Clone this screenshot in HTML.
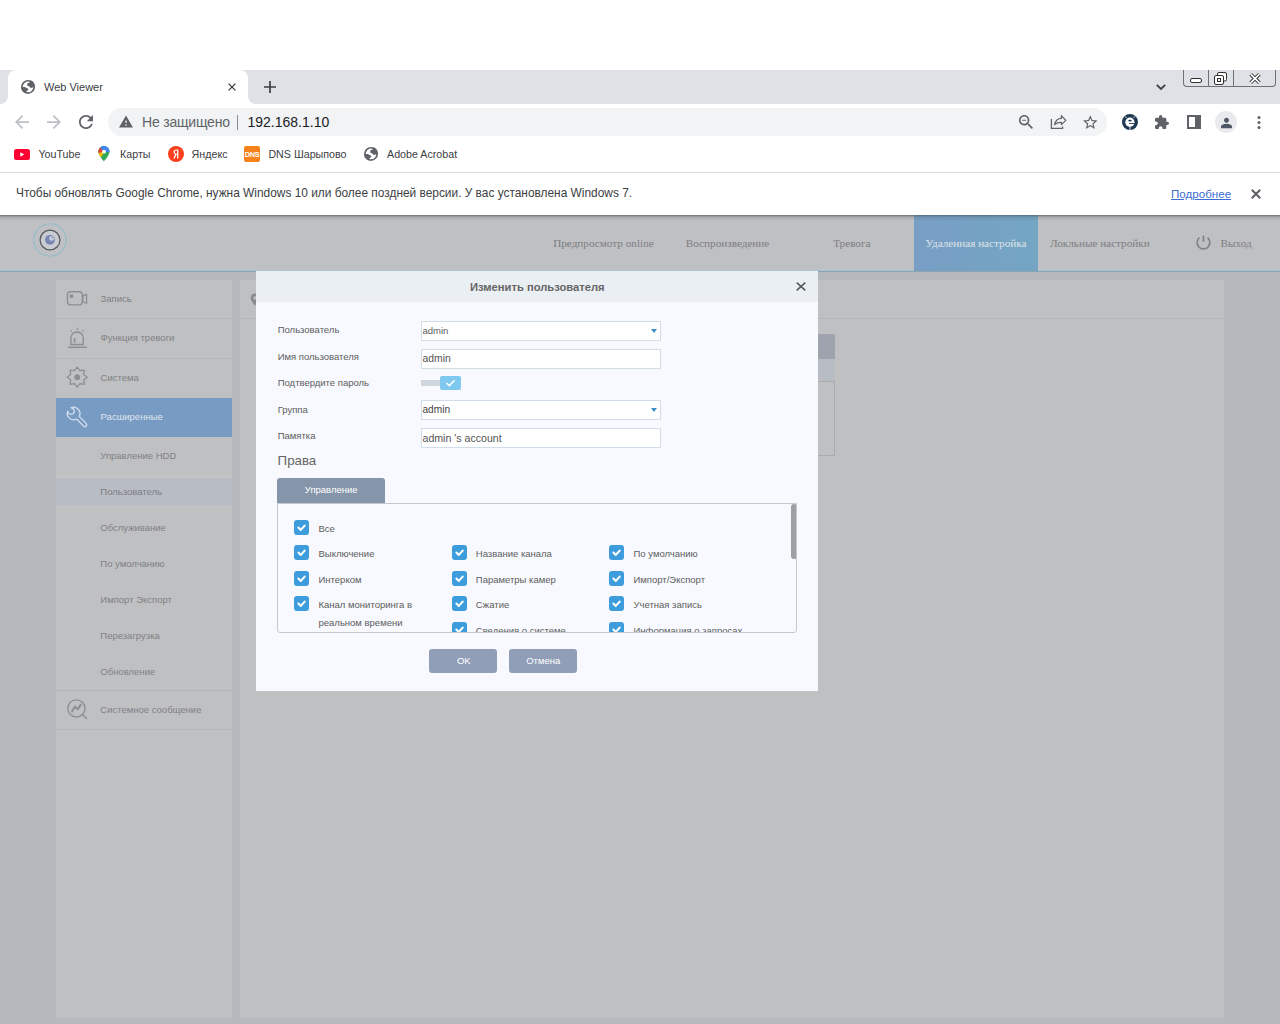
<!DOCTYPE html>
<html><head><meta charset="utf-8">
<style>
*{margin:0;padding:0;box-sizing:border-box}
html,body{width:1280px;height:1024px;overflow:hidden;background:#fff;font-family:"Liberation Sans",sans-serif}
.a{position:absolute}
.t{position:absolute;white-space:nowrap;line-height:1}
.sf{font-family:"Liberation Serif",serif}
svg{position:absolute;overflow:visible}
</style></head><body>
<!-- ============ CHROME ============ -->
<div class="a" style="left:0;top:0;width:1280px;height:70px;background:#fff"></div>
<div class="a" id="tabbar" style="left:0;top:70px;width:1280px;height:34px;background:#dee1e6"></div>
<!-- active tab -->
<div class="a" style="left:8px;top:70px;width:240px;height:34px;background:#fff;border-radius:8px 8px 0 0"></div>
<div class="a" style="left:0;top:96px;width:8px;height:8px;background:#fff"></div>
<div class="a" style="left:0;top:88px;width:8px;height:16px;background:#dee1e6;border-radius:0 0 8px 0"></div>
<div class="a" style="left:248px;top:96px;width:8px;height:8px;background:#fff"></div>
<div class="a" style="left:248px;top:88px;width:8px;height:16px;background:#dee1e6;border-radius:0 0 0 8px"></div>
<!-- toolbar -->
<div class="a" style="left:0;top:104px;width:1280px;height:68px;background:#fff"></div>
<div class="a" style="left:108px;top:108px;width:999px;height:28px;background:#f1f3f4;border-radius:14px"></div>
<div class="a" style="left:0;top:172px;width:1280px;height:1px;background:#dadce0"></div>
<!-- infobar -->
<div class="a" style="left:0;top:173px;width:1280px;height:42px;background:#fff"></div>


<!-- tab content -->
<svg style="left:18px;top:77px" width="20" height="20" viewBox="0 0 20 20"><circle cx="10" cy="9.9" r="6.15" fill="#fff" stroke="#5f6368" stroke-width="1.7"/><path d="M12.6 3.3L11.2 5.8L9.4 6.3L9.2 8.6L11.6 9.8L12.6 11L14.6 10.4L16.7 9.8A6.8 6.8 0 0 0 12.6 3.3Z" fill="#5f6368"/><path d="M3.3 10.1L6.6 10L9.4 11.2L10.6 12.4L8.6 14.2L8 16.5A6.8 6.8 0 0 1 3.3 10.1Z" fill="#5f6368"/></svg>
<div class="t" style="left:44px;top:81.7px;font-size:11px;color:#3c4043">Web Viewer</div>
<svg style="left:228px;top:83px" width="8" height="8" viewBox="0 0 8 8"><path d="M0.6 0.6L7.4 7.4M7.4 0.6L0.6 7.4" stroke="#3c4043" stroke-width="1.3"/></svg>
<svg style="left:264px;top:81px" width="12" height="12" viewBox="0 0 12 12"><path d="M6 0V12M0 6H12" stroke="#3c4043" stroke-width="1.7"/></svg>
<svg style="left:1156px;top:83.5px" width="10" height="6" viewBox="0 0 10 6"><path d="M0.8 0.8L5 5L9.2 0.8" fill="none" stroke="#3c4043" stroke-width="1.8"/></svg>
<!-- window buttons -->
<div class="a" style="left:1183px;top:70px;width:93px;height:17px;border:1px solid #6f7174;border-top:none;border-radius:0 0 4px 4px"></div>
<div class="a" style="left:1208px;top:70px;width:1px;height:16px;background:#6f7174"></div>
<div class="a" style="left:1233px;top:70px;width:1px;height:16px;background:#6f7174"></div>
<div class="a" style="left:1190px;top:78px;width:12px;height:5px;border:1px solid #303030;border-radius:2px;background:#fff"></div>
<svg style="left:1214px;top:72px" width="13" height="13" viewBox="0 0 13 13"><rect x="3.5" y="0.5" width="9" height="8.5" rx="1.5" fill="#fff" stroke="#303030"/><rect x="0.5" y="3.5" width="9" height="9" rx="1.5" fill="#fff" stroke="#303030"/><rect x="3.5" y="6.5" width="3" height="3" fill="#fff" stroke="#303030"/></svg>
<svg style="left:1248.5px;top:72.5px" width="12" height="11" viewBox="0 0 12 11"><path d="M1.6 1.2L10.4 9.8M10.4 1.2L1.6 9.8" stroke="#303030" stroke-width="3.6"/><path d="M1.6 1.2L10.4 9.8M10.4 1.2L1.6 9.8" stroke="#fff" stroke-width="1.7"/></svg>
<!-- nav buttons -->
<svg style="left:15px;top:115px" width="14" height="14" viewBox="4 4 16 16"><path fill="#bdc1c6" d="M20 11H7.83l5.59-5.59L12 4l-8 8 8 8 1.41-1.41L7.83 13H20v-2z"/></svg>
<svg style="left:47px;top:115px" width="14" height="14" viewBox="4 4 16 16"><path fill="#bdc1c6" d="M12 4l-1.41 1.41L16.17 11H4v2h12.17l-5.58 5.59L12 20l8-8z"/></svg>
<svg style="left:79px;top:115px" width="14" height="14" viewBox="4 4 16 16"><path fill="#5f6368" d="M17.65 6.35C16.2 4.9 14.21 4 12 4c-4.42 0-7.99 3.58-7.99 8s3.57 8 7.99 8c3.73 0 6.84-2.55 7.73-6h-2.08c-.82 2.33-3.04 4-5.65 4-3.31 0-6-2.690-6-6s2.69-6 6-6c1.66 0 3.14.69 4.22 1.78L13 11h7V4l-2.35 2.35z"/></svg>
<!-- omnibox content -->
<svg style="left:119px;top:115px" width="14" height="13" viewBox="1 2 22 19"><path fill="#5f6368" d="M1 21h22L12 2 1 21zm12-3h-2v-2h2v2zm0-4h-2v-4h2v4z"/></svg>
<div class="t" style="left:142px;top:115.3px;font-size:14px;letter-spacing:-0.2px;color:#5f6368">Не защищено</div>
<div class="a" style="left:237px;top:115px;width:1px;height:15px;background:#8a8e93"></div>
<div class="t" style="left:247.5px;top:115.3px;font-size:14px;color:#202124">192.168.1.10</div>
<svg style="left:1019px;top:115px" width="14" height="14" viewBox="3 3 17.5 17.5"><path fill="#5f6368" d="M15.5 14h-.79l-.28-.27C15.41 12.590 16 11.11 16 9.5 16 5.91 13.09 3 9.5 3S3 5.91 3 9.5 5.91 16 9.5 16c1.61 0 3.09-.59 4.23-1.57l.27.28v.79l5 4.99L20.490 19l-4.99-5zm-6 0C7.01 14 5 11.99 5 9.5S7.01 5 9.5 5 14 7.01 14 9.5 11.99 14 9.5 14zM7 9h5v1.3H7z"/></svg>
<svg style="left:1046px;top:110px" width="24" height="24" viewBox="0 0 24 24"><path d="M5.4 9V18.4H16.6V16.6" fill="none" stroke="#5f6368" stroke-width="1.3"/><path d="M8.6 14.6C9.5 10.5 12 8.3 15.4 8.3V5.6L19.8 10.4L15.4 14.6V12.4C12.3 12.2 10.2 13.2 8.6 14.6Z" fill="none" stroke="#5f6368" stroke-width="1.25" stroke-linejoin="round"/></svg>
<svg style="left:1082.6px;top:114.6px" width="14.6" height="14.2" viewBox="2 2 20 19"><path fill="#5f6368" d="M22 9.24l-7.19-.62L12 2 9.19 8.63 2 9.24l5.46 4.73L5.82 21 12 17.27 18.18 21l-1.63-7.03L22 9.24zM12 15.4l-3.76 2.27 1-4.28-3.32-2.88 4.38-.38L12 6.1l1.71 4.04 4.38.38-3.32 2.88 1 4.28L12 15.4z"/></svg>
<!-- extensions -->
<svg style="left:1118px;top:110px" width="24" height="24" viewBox="0 0 24 24"><circle cx="12" cy="12" r="8" fill="#1f3a52"/><path d="M6.8 6.2L8.6 8M17.2 6.2L15.4 8M12 16V20" stroke="#fff" stroke-width="1" opacity="0.85"/><circle cx="11.9" cy="12.2" r="4.6" fill="#fff"/><ellipse cx="12" cy="10.6" rx="1.8" ry="0.85" fill="#1f3a52"/><path d="M11 13.1H16.8V14H11z" fill="#1f3a52"/></svg>
<svg style="left:1155px;top:115px" width="14" height="14" viewBox="2 1 21 21"><path fill="#5f6368" d="M20.5 11H19V7c0-1.1-.9-2-2-2h-4V3.5C13 2.12 11.88 1 10.5 1S8 2.12 8 3.5V5H4c-1.1 0-1.99.9-1.99 2v3.8H3.5c1.49 0 2.7 1.21 2.7 2.7s-1.21 2.7-2.7 2.7H2V20c0 1.1.9 2 2 2h3.8v-1.5c0-1.49 1.21-2.7 2.7-2.7 1.49 0 2.7 1.21 2.7 2.7V22H17c1.1 0 2-.9 2-2v-4h1.5c1.38 0 2.5-1.12 2.5-2.5S21.88 11 20.5 11z"/></svg>
<svg style="left:1187px;top:115px" width="14" height="14" viewBox="0 0 14 14"><rect x="1" y="1" width="12" height="12" fill="none" stroke="#5f6368" stroke-width="2"/><rect x="8" y="1" width="5" height="12" fill="#5f6368"/></svg>
<div class="a" style="left:1215px;top:111px;width:22px;height:22px;border-radius:11px;background:#e8eaed"></div>
<svg style="left:1219.5px;top:115.5px" width="13" height="13" viewBox="3 3 18 18"><path fill="#4f5866" d="M12 12.2c2.000 0 3.400-1.500 3.400-3.400S14 5.400 12 5.400 8.600 6.900 8.600 8.800 10 12.200 12 12.200zm0 1.600c-2.400 0-7.600 1.200-7.600 3.600V20h15.200v-2.600c0-2.400-5.200-3.600-7.600-3.600z"/></svg>
<svg style="left:1256.5px;top:114px" width="4" height="17" viewBox="0 0 4 17"><circle cx="2" cy="3.5" r="1.5" fill="#5f6368"/><circle cx="2" cy="8.5" r="1.5" fill="#5f6368"/><circle cx="2" cy="13.5" r="1.5" fill="#5f6368"/></svg>
<!-- bookmarks -->
<svg style="left:14px;top:148.5px" width="16" height="11" viewBox="0 0 16 11"><rect width="16" height="11" rx="2.5" fill="#ff0033"/><path d="M6.3 3.2V7.8L10.2 5.5z" fill="#fff"/></svg>
<div class="t" style="left:38.4px;top:148.9px;font-size:10.7px;color:#3c4043">YouTube</div>
<svg style="left:94px;top:144px" width="20" height="20" viewBox="0 0 20 20"><defs><clipPath id="pinc"><path d="M9.9 2C6.8 2 4.3 4.5 4.3 7.6C4.3 11.6 9.9 17.4 9.9 17.4C9.9 17.4 15.5 11.6 15.5 7.6C15.5 4.5 13 2 9.9 2Z"/></clipPath></defs><g clip-path="url(#pinc)"><rect width="20" height="20" fill="#34a853"/><path d="M10 7.7L4.5 2.2L4.5 0L20 0L20 9.2Z" fill="#4285f4"/><path d="M10 7.7L4.5 2.2L0 2.2L0 10.2Z" fill="#ea4335"/><path d="M10 7.7L0 10.2L0 14L7.6 12.8Z" fill="#fbbc04"/></g><circle cx="10" cy="7.7" r="1.9" fill="#fff"/></svg>
<div class="t" style="left:120px;top:148.9px;font-size:10.7px;color:#3c4043">Карты</div>
<svg style="left:168px;top:146px" width="16" height="16" viewBox="0 0 16 16"><circle cx="8" cy="8" r="8" fill="#fc3f1d"/><path d="M9.1 3.6H8.1C6.5 3.6 5.5 4.500 5.5 6C5.5 7.2 6.1 7.900 7.1 8.400L5.300 12.4H6.800L8.400 8.700H9.100V12.4H10.400V3.6z M9.1 7.700H8.300C7.300 7.700 6.900 7.100 6.900 6.100C6.900 5.100 7.400 4.600 8.300 4.600H9.100z" fill="#fff"/></svg>
<div class="t" style="left:191.6px;top:148.9px;font-size:10.7px;color:#3c4043">Яндекс</div>
<svg style="left:244px;top:146px" width="16" height="16" viewBox="0 0 16 16"><rect width="16" height="16" rx="2" fill="#f7821b"/><text x="8" y="10.9" font-family="Liberation Sans" font-size="7.4" font-weight="bold" fill="#fff" text-anchor="middle" letter-spacing="-0.45">DNS</text></svg>
<div class="t" style="left:268.4px;top:148.9px;font-size:10.7px;color:#3c4043">DNS Шарыпово</div>
<svg style="left:360.8px;top:144.4px" width="20" height="20" viewBox="0 0 20 20"><circle cx="10" cy="9.9" r="6.15" fill="#fff" stroke="#5f6368" stroke-width="1.7"/><path d="M12.6 3.3L11.2 5.8L9.4 6.3L9.2 8.6L11.6 9.8L12.6 11L14.6 10.4L16.7 9.8A6.8 6.8 0 0 0 12.6 3.3Z" fill="#5f6368"/><path d="M3.3 10.1L6.6 10L9.4 11.2L10.6 12.4L8.6 14.2L8 16.5A6.8 6.8 0 0 1 3.3 10.1Z" fill="#5f6368"/></svg>
<div class="t" style="left:387px;top:148.9px;font-size:10.7px;color:#3c4043">Adobe Acrobat</div>
<!-- infobar content -->
<div class="t" style="left:16px;top:187.7px;font-size:11.9px;color:#3c4043">Чтобы обновлять Google Chrome, нужна Windows 10 или более поздней версии. У вас установлена Windows 7.</div>
<div class="t" style="left:1171px;top:188px;font-size:11.6px;color:#3a6cd2;text-decoration:underline">Подробнее</div>
<svg style="left:1251px;top:189px" width="10" height="10" viewBox="0 0 10 10"><path d="M0.8 0.8L9.2 9.2M9.2 0.8L0.8 9.2" stroke="#5f6368" stroke-width="2.1"/></svg>

<!-- ============ PAGE ============ -->
<div class="a" id="page" style="left:0;top:215px;width:1280px;height:809px;background:#b5b8bc"></div>
<!-- header -->
<div class="a" style="left:0;top:215px;width:1280px;height:56px;background:#bfc0c3"></div>
<div class="a" style="left:0;top:215px;width:1280px;height:6px;background:linear-gradient(#6f7072,rgba(150,150,152,0.5) 35%,rgba(190,190,193,0))"></div>
<div class="a" style="left:0;top:270px;width:1280px;height:1px;background:#abc4d1"></div>
<div class="a" style="left:0;top:271px;width:1280px;height:1px;background:#8aa4b1"></div>
<div class="a" style="left:914px;top:215px;width:124px;height:56px;background:linear-gradient(90deg,#789ec4,#74a5c3)"></div>
<div class="a" style="left:914px;top:215px;width:124px;height:6px;background:linear-gradient(rgba(60,70,80,0.55),rgba(60,70,80,0.15) 35%,rgba(60,70,80,0))"></div>
<svg style="left:33px;top:223px" width="34" height="34" viewBox="0 0 34 34"><circle cx="17" cy="17" r="16.2" fill="none" stroke="#92bccb" stroke-width="1.1"/><circle cx="17" cy="17" r="9.9" fill="#c9cdd3" stroke="#58595b" stroke-width="1.25"/><circle cx="17" cy="16.8" r="4.9" fill="#7987b0"/><circle cx="18.6" cy="15.4" r="2.4" fill="#c9cfdc"/><circle cx="19.3" cy="14.6" r="0.8" fill="#7d88a8"/></svg>
<div class="t sf" style="left:553.2px;top:237.6px;font-size:11.2px;color:#7d7e82">Предпросмотр online</div>
<div class="t sf" style="left:685.8px;top:237.6px;font-size:11.2px;color:#7d7e82">Воспроизведение</div>
<div class="t sf" style="left:833.2px;top:237.6px;font-size:11.2px;color:#7d7e82">Тревога</div>
<div class="t sf" style="left:925.6px;top:237.6px;font-size:11.2px;color:#dfe4ea">Удаленная настройка</div>
<div class="t sf" style="left:1049.9px;top:237.6px;font-size:11.2px;color:#7d7e82">Локльные настройки</div>
<svg style="left:1196px;top:235px" width="15" height="15" viewBox="0 0 15 15"><path d="M3.39 2.7A6.4 6.4 0 1 0 11.61 2.7" fill="none" stroke="#818286" stroke-width="1.7"/><path d="M7.5 0.6V6.9" stroke="#818286" stroke-width="1.6"/></svg>
<div class="t sf" style="left:1220.6px;top:237.6px;font-size:11.2px;color:#7d7e82">Выход</div>

<!-- sidebar -->
<div class="a" style="left:56px;top:280px;width:176px;height:738px;background:#bfc0c2"></div>
<div class="a" style="left:56px;top:318px;width:176px;height:1px;background:#b3b5b8"></div>
<div class="a" style="left:56px;top:358px;width:176px;height:1px;background:#b3b5b8"></div>
<div class="a" style="left:56px;top:398px;width:176px;height:39px;background:#789bc4"></div>
<div class="a" style="left:56px;top:475px;width:176px;height:3px;background:#c3c4c6"></div>
<div class="a" style="left:56px;top:478px;width:176px;height:28px;background:#b8bcc4"></div>
<div class="a" style="left:56px;top:506px;width:176px;height:2px;background:#c3c4c6"></div>
<div class="a" style="left:56px;top:690px;width:176px;height:1px;background:#b3b5b8"></div>
<div class="a" style="left:56px;top:729px;width:176px;height:1px;background:#b3b5b8"></div>
<!-- sidebar icons -->
<svg style="left:62px;top:285px" width="30" height="30" viewBox="0 0 30 30"><rect x="5.4" y="6.7" width="14.9" height="13.1" rx="3" fill="none" stroke="#8c8e92" stroke-width="1.35"/><path d="M21 10.6L24.6 9.4V18.2L21 17z" fill="none" stroke="#8c8e92" stroke-width="1.3" stroke-linejoin="round"/><circle cx="9.5" cy="11.2" r="1.9" fill="#8c8e92"/></svg>
<svg style="left:62px;top:323px" width="30" height="30" viewBox="0 0 30 30"><path d="M8.9 21.5V15.2A6.2 6.2 0 0 1 21.3 15.2V21.5Z" fill="none" stroke="#8c8e92" stroke-width="1.35"/><path d="M6 24.3H25" stroke="#8c8e92" stroke-width="1.5"/><path d="M12.6 15V19.6" stroke="#8c8e92" stroke-width="1.6"/><path d="M15.4 4.8V6.8M8.6 7.3L9.6 8.5M21.6 7.3L20.6 8.5" stroke="#8c8e92" stroke-width="1.3"/></svg>
<svg style="left:62px;top:362px" width="30" height="30" viewBox="0 0 30 30"><path d="M15.20 5.20 L17.88 8.73 L22.27 8.13 L21.67 12.52 L25.20 15.20 L21.67 17.88 L22.27 22.27 L17.88 21.67 L15.20 25.20 L12.52 21.67 L8.13 22.27 L8.73 17.88 L5.20 15.20 L8.73 12.52 L8.13 8.13 L12.52 8.73Z" fill="none" stroke="#8c8e92" stroke-width="1.25" stroke-linejoin="round"/><circle cx="15.2" cy="15.2" r="2.9" fill="#8c8e92"/></svg>
<svg style="left:62px;top:402px" width="30" height="30" viewBox="0 0 30 30"><path d="M9 5.8A6.3 6.3 0 0 1 17.2 14.4L24.2 21.4A1.84 1.84 0 0 1 21.6 24L14.6 17A6.3 6.3 0 0 1 5.8 9A3.2 3.2 0 1 0 9 5.8Z" fill="none" stroke="#d3deea" stroke-width="1.3" stroke-linejoin="round"/></svg>
<svg style="left:62px;top:694px" width="30" height="30" viewBox="0 0 30 30"><circle cx="14.4" cy="14.4" r="8.6" fill="none" stroke="#8c8e92" stroke-width="1.35"/><path d="M20.6 20.6L24.5 24.5" stroke="#8c8e92" stroke-width="1.4" stroke-linecap="round"/><path d="M10 17.5L13 12.6L15.5 15.4L18.8 10.6" fill="none" stroke="#8c8e92" stroke-width="1.9" stroke-linecap="round" stroke-linejoin="round"/></svg>
<!-- sidebar text -->
<div class="t" style="left:100.6px;top:294px;font-size:9.5px;color:#808185">Запись</div>
<div class="t" style="left:100.6px;top:333px;font-size:9.5px;color:#808185">Функция тревоги</div>
<div class="t" style="left:100.6px;top:373px;font-size:9.5px;color:#808185">Система</div>
<div class="t" style="left:100.6px;top:412.2px;font-size:9.5px;color:#dfe5ed">Расширенные</div>
<div class="t" style="left:100.3px;top:451px;font-size:9.5px;color:#808185">Управление HDD</div>
<div class="t" style="left:100.3px;top:487px;font-size:9.5px;color:#7d7f83">Пользователь</div>
<div class="t" style="left:100.3px;top:523px;font-size:9.5px;color:#808185">Обслуживание</div>
<div class="t" style="left:100.3px;top:559px;font-size:9.5px;color:#808185">По умолчанию</div>
<div class="t" style="left:100.3px;top:595px;font-size:9.5px;color:#808185">Импорт Экспорт</div>
<div class="t" style="left:100.3px;top:631px;font-size:9.5px;color:#808185">Перезагрузка</div>
<div class="t" style="left:100.3px;top:667px;font-size:9.5px;color:#808185">Обновление</div>
<div class="t" style="left:100.3px;top:705px;font-size:9.5px;color:#808185">Системное сообщение</div>

<!-- main -->
<div class="a" style="left:240px;top:280px;width:984px;height:738px;background:#bfc0c2"></div>
<div class="a" style="left:240px;top:318px;width:984px;height:1px;background:#b3b5b8"></div>
<svg style="left:250px;top:292.5px" width="10" height="13" viewBox="0 0 10 13"><path d="M5 0.5C2.500 0.500 0.600 2.400 0.600 4.900C0.600 8.000 5 12.500 5 12.500C5 12.500 9.400 8.000 9.400 4.900C9.400 2.400 7.500 0.500 5 0.500Z M5 3.2A1.700 1.700 0 1 1 5 6.600A1.700 1.700 0 1 1 5 3.2Z" fill="#8a8c90" fill-rule="evenodd"/></svg>
<!-- table behind modal -->
<div class="a" style="left:700px;top:334px;width:135px;height:122px;border:1px solid #a9abaf;background:#bfc0c2"></div>
<div class="a" style="left:700px;top:334px;width:135px;height:25px;background:#9fa3ad"></div>
<div class="a" style="left:700px;top:359px;width:135px;height:23px;background:#b8bcc3;border-bottom:1px solid #a9abaf"></div>

<!-- ============ MODAL ============ -->
<div class="a" id="modal" style="left:256px;top:271px;width:562px;height:420px;background:#f7f9fe"></div>
<div class="a" style="left:256px;top:271px;width:562px;height:31px;background:linear-gradient(#eaeff3 0,#eaeff3 26px,#eef1f4 27px,#e8ecf0 28px,#eff2f5 29px,#e9edf1 30px,#e9edf1 31px)"></div>
<div class="t" style="left:470px;top:281.7px;font-size:11.2px;font-weight:bold;color:#666">Изменить пользователя</div>
<svg style="left:795.6px;top:282px" width="10" height="9" viewBox="0 0 10 9"><path d="M0.7 0.6L9.3 8.4M9.3 0.6L0.7 8.4" stroke="#555" stroke-width="1.45"/></svg>
<div class="t" style="left:277.7px;top:325.06px;font-size:9.5px;color:#5d5d5d">Пользователь</div>
<div class="t" style="left:277.7px;top:351.71px;font-size:9.5px;color:#5d5d5d">Имя пользователя</div>
<div class="t" style="left:277.7px;top:378.21px;font-size:9.5px;color:#5d5d5d">Подтвердите пароль</div>
<div class="t" style="left:277.7px;top:405.06px;font-size:9.5px;color:#5d5d5d">Группа</div>
<div class="t" style="left:277.7px;top:430.96px;font-size:9.5px;color:#5d5d5d">Памятка</div>
<div class="a" style="left:421px;top:321px;width:240px;height:20px;background:#fff;border:1px solid #d3dde7"></div>
<div class="a" style="left:421px;top:349px;width:240px;height:20px;background:#fff;border:1px solid #d3dde7"></div>
<div class="a" style="left:421px;top:400px;width:240px;height:20px;background:#fff;border:1px solid #d3dde7"></div>
<div class="a" style="left:421px;top:428px;width:240px;height:20px;background:#fff;border:1px solid #d3dde7"></div>
<svg style="left:651px;top:328.5px" width="6" height="4" viewBox="0 0 6 4"><path d="M0 0H6L3 4z" fill="#3a8fc8"/></svg>
<svg style="left:651px;top:407.5px" width="6" height="4" viewBox="0 0 6 4"><path d="M0 0H6L3 4z" fill="#3a8fc8"/></svg>
<div class="t" style="left:422.5px;top:325.96px;font-size:9.5px;color:#5d5d5d">admin</div>
<div class="t" style="left:422.5px;top:353.90px;font-size:10.4px;color:#555">admin</div>
<div class="t" style="left:422.5px;top:404.55px;font-size:10.1px;color:#444">admin</div>
<div class="t" style="left:422.5px;top:433.03px;font-size:10.6px;color:#555">admin 's account</div>
<div class="a" style="left:421px;top:380px;width:22px;height:6px;background:#d0d6de"></div>
<svg style="left:440px;top:376px" width="21" height="14" viewBox="0 0 21 14"><rect width="21" height="14" rx="2" fill="#7fc8ef"/><path d="M6.5 7L9.3 9.6L14.5 4.4" fill="none" stroke="#fff" stroke-width="1.5"/></svg>
<div class="t" style="left:277.6px;top:454.34px;font-size:13.3px;color:#666">Права</div>
<div class="a" style="left:277px;top:478px;width:108px;height:25px;background:#8696aa;border-radius:3px 3px 0 0"></div>
<div class="t" style="left:304.8px;top:484.6px;font-size:9.5px;color:#fff">Управление</div>
<div class="a" style="left:277px;top:503px;width:520px;height:130px;border:1px solid #c5c9ce;border-radius:0 0 3px 3px;overflow:hidden">
<div class="a" style="left:512.5px;top:0;width:6px;height:55px;background:#9d9fa3;border-radius:3px"></div>
<svg style="left:16px;top:16px" width="15" height="15" viewBox="0 0 15 15"><rect width="15" height="15" rx="3" fill="#3d9cdb"/><path d="M4.4 7.6L6.8 9.9L10.7 5.6" fill="none" stroke="#fff" stroke-width="2.1" stroke-linecap="round" stroke-linejoin="round"/></svg>
<div class="t" style="left:40.5px;top:19.76px;font-size:9.5px;color:#5d5d5d">Все</div>
<svg style="left:16px;top:41px" width="15" height="15" viewBox="0 0 15 15"><rect width="15" height="15" rx="3" fill="#3d9cdb"/><path d="M4.4 7.6L6.8 9.9L10.7 5.6" fill="none" stroke="#fff" stroke-width="2.1" stroke-linecap="round" stroke-linejoin="round"/></svg>
<div class="t" style="left:40.5px;top:44.76px;font-size:9.5px;color:#5d5d5d">Выключение</div>
<svg style="left:16px;top:67px" width="15" height="15" viewBox="0 0 15 15"><rect width="15" height="15" rx="3" fill="#3d9cdb"/><path d="M4.4 7.6L6.8 9.9L10.7 5.6" fill="none" stroke="#fff" stroke-width="2.1" stroke-linecap="round" stroke-linejoin="round"/></svg>
<div class="t" style="left:40.5px;top:70.76px;font-size:9.5px;color:#5d5d5d">Интерком</div>
<svg style="left:16px;top:92px" width="15" height="15" viewBox="0 0 15 15"><rect width="15" height="15" rx="3" fill="#3d9cdb"/><path d="M4.4 7.6L6.8 9.9L10.7 5.6" fill="none" stroke="#fff" stroke-width="2.1" stroke-linecap="round" stroke-linejoin="round"/></svg>
<div class="t" style="left:40.5px;top:95.76px;font-size:9.5px;color:#5d5d5d">Канал мониторинга в</div>
<div class="t" style="left:40.5px;top:113.76px;font-size:9.5px;color:#5d5d5d">реальном времени</div>
<svg style="left:174px;top:41px" width="15" height="15" viewBox="0 0 15 15"><rect width="15" height="15" rx="3" fill="#3d9cdb"/><path d="M4.4 7.6L6.8 9.9L10.7 5.6" fill="none" stroke="#fff" stroke-width="2.1" stroke-linecap="round" stroke-linejoin="round"/></svg>
<div class="t" style="left:197.8px;top:44.76px;font-size:9.5px;color:#5d5d5d">Название канала</div>
<svg style="left:174px;top:67px" width="15" height="15" viewBox="0 0 15 15"><rect width="15" height="15" rx="3" fill="#3d9cdb"/><path d="M4.4 7.6L6.8 9.9L10.7 5.6" fill="none" stroke="#fff" stroke-width="2.1" stroke-linecap="round" stroke-linejoin="round"/></svg>
<div class="t" style="left:197.8px;top:70.76px;font-size:9.5px;color:#5d5d5d">Параметры камер</div>
<svg style="left:174px;top:92px" width="15" height="15" viewBox="0 0 15 15"><rect width="15" height="15" rx="3" fill="#3d9cdb"/><path d="M4.4 7.6L6.8 9.9L10.7 5.6" fill="none" stroke="#fff" stroke-width="2.1" stroke-linecap="round" stroke-linejoin="round"/></svg>
<div class="t" style="left:197.8px;top:95.76px;font-size:9.5px;color:#5d5d5d">Сжатие</div>
<svg style="left:174px;top:118px" width="15" height="15" viewBox="0 0 15 15"><rect width="15" height="15" rx="3" fill="#3d9cdb"/><path d="M4.4 7.6L6.8 9.9L10.7 5.6" fill="none" stroke="#fff" stroke-width="2.1" stroke-linecap="round" stroke-linejoin="round"/></svg>
<div class="t" style="left:197.8px;top:121.76px;font-size:9.5px;color:#5d5d5d">Сведения о системе</div>
<svg style="left:331px;top:41px" width="15" height="15" viewBox="0 0 15 15"><rect width="15" height="15" rx="3" fill="#3d9cdb"/><path d="M4.4 7.6L6.8 9.9L10.7 5.6" fill="none" stroke="#fff" stroke-width="2.1" stroke-linecap="round" stroke-linejoin="round"/></svg>
<div class="t" style="left:355.5px;top:44.76px;font-size:9.5px;color:#5d5d5d">По умолчанию</div>
<svg style="left:331px;top:67px" width="15" height="15" viewBox="0 0 15 15"><rect width="15" height="15" rx="3" fill="#3d9cdb"/><path d="M4.4 7.6L6.8 9.9L10.7 5.6" fill="none" stroke="#fff" stroke-width="2.1" stroke-linecap="round" stroke-linejoin="round"/></svg>
<div class="t" style="left:355.5px;top:70.76px;font-size:9.5px;color:#5d5d5d">Импорт/Экспорт</div>
<svg style="left:331px;top:92px" width="15" height="15" viewBox="0 0 15 15"><rect width="15" height="15" rx="3" fill="#3d9cdb"/><path d="M4.4 7.6L6.8 9.9L10.7 5.6" fill="none" stroke="#fff" stroke-width="2.1" stroke-linecap="round" stroke-linejoin="round"/></svg>
<div class="t" style="left:355.5px;top:95.76px;font-size:9.5px;color:#5d5d5d">Учетная запись</div>
<svg style="left:331px;top:118px" width="15" height="15" viewBox="0 0 15 15"><rect width="15" height="15" rx="3" fill="#3d9cdb"/><path d="M4.4 7.6L6.8 9.9L10.7 5.6" fill="none" stroke="#fff" stroke-width="2.1" stroke-linecap="round" stroke-linejoin="round"/></svg>
<div class="t" style="left:355.5px;top:121.76px;font-size:9.5px;color:#5d5d5d">Информация о запросах</div>
</div>
<div class="a" style="left:429px;top:649px;width:68px;height:24px;background:#919eb8;border-radius:3px"></div>
<div class="a" style="left:509px;top:649px;width:68px;height:24px;background:#919eb8;border-radius:3px"></div>
<div class="t" style="left:456.9px;top:656.16px;font-size:9.5px;color:#fff">OK</div>
<div class="t" style="left:526.2px;top:656.16px;font-size:9.5px;color:#fff">Отмена</div>
</body></html>
